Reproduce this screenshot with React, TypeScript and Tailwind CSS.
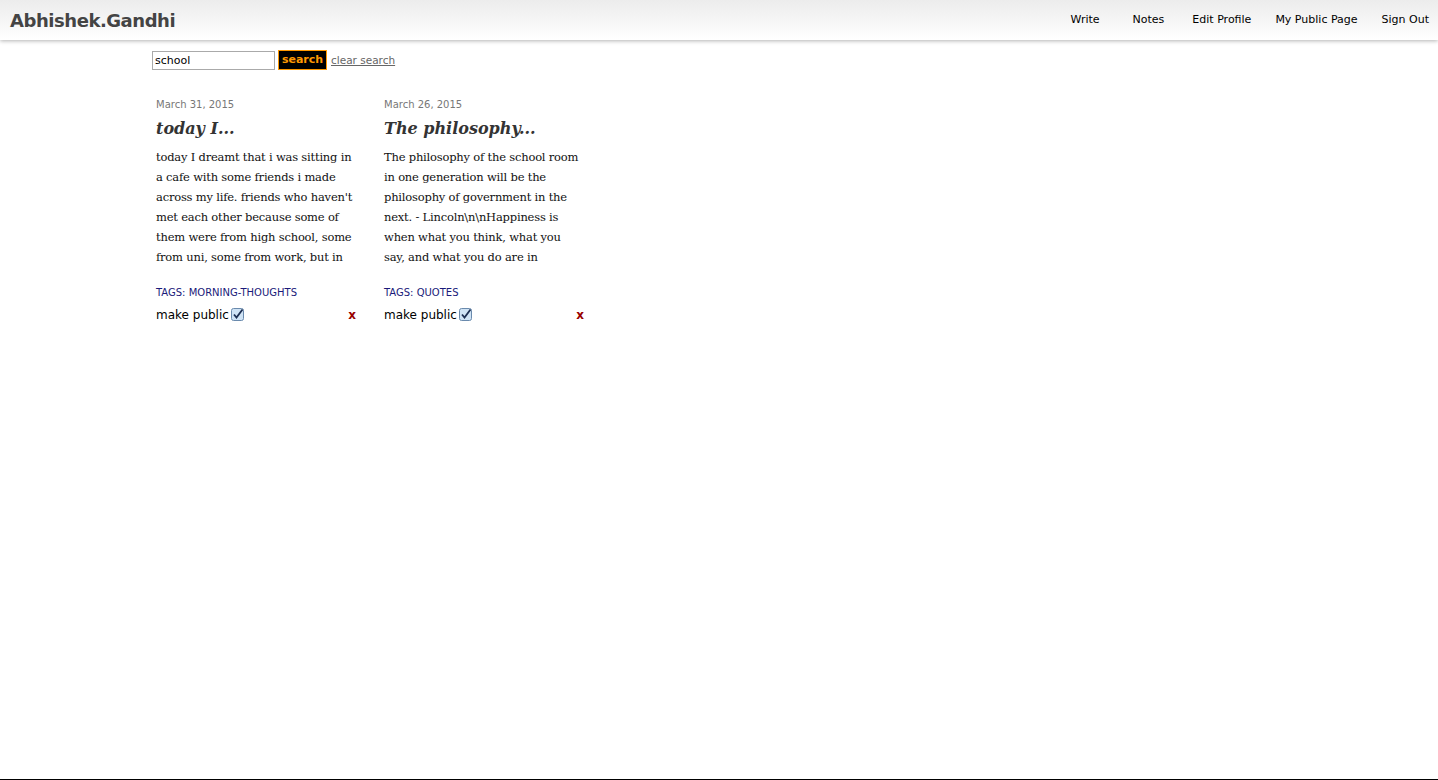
import { useState } from 'react';

// body lines are broken where the reference breaks them
const notes = [
  {
    date: 'March 31, 2015',
    title: 'today I...',
    lines: [
      'today I dreamt that i was sitting in',
      'a cafe with some friends i made',
      "across my life. friends who haven't",
      'met each other because some of',
      'them were from high school, some',
      'from uni, some from work, but in',
    ],
    tag: 'morning-thoughts',
  },
  {
    date: 'March 26, 2015',
    title: 'The philosophy...',
    lines: [
      'The philosophy of the school room',
      'in one generation will be the',
      'philosophy of government in the',
      'next. - Lincoln\\n\\nHappiness is',
      'when what you think, what you',
      'say, and what you do are in',
    ],
    tag: 'quotes',
  },
];

function CheckIcon() {
  return (
    <svg width="13" height="13" viewBox="0 0 13 13" className="ml-[2px] inline-block align-[-2px]">
      <rect x="0.5" y="0.5" width="12" height="12" rx="2" fill="#cfe3f5" stroke="#6a8aad" />
      <path d="M3 6.5 L5.5 9.5 L11.5 1.5" fill="none" stroke="#1d2f52" strokeWidth="1.8" />
    </svg>
  );
}

export default function App() {
  const [query, setQuery] = useState('school');

  return (
    <div className="relative h-[780px] bg-white border-b border-black font-['DejaVu_Sans',sans-serif]">
      {/* Top bar */}
      <header className="flex h-10 items-center justify-between bg-gradient-to-b from-[#ececec] to-white pl-[10px] pr-[9px] shadow-[0_1px_4px_rgba(0,0,0,0.3)]">
        <div className="text-[18px] font-bold tracking-[-0.45px] text-[#444]">Abhishek.Gandhi</div>
        <nav className="flex text-[11px] text-black">
          <span>Write</span>
          <span className="ml-[33px]">Notes</span>
          <span className="ml-[28px]">Edit Profile</span>
          <span className="ml-[24px]">My Public Page</span>
          <span className="ml-[24px]">Sign Out</span>
        </nav>
      </header>

      <main className="pl-[152px] pt-[10px]">
        {/* Search */}
        <div className="flex items-center">
          <input
            value={query}
            onChange={(e) => setQuery(e.target.value)}
            className="h-[19px] w-[123px] border border-[#aaa] px-[2px] text-[11px] text-black outline-none"
          />
          <button className="ml-[3px] h-[20px] w-[49px] border border-[#f90] bg-black text-[11px] font-bold text-[#f90]">
            search
          </button>
          <a className="ml-[4px] mt-[1px] text-[10.5px] text-[#666] underline">clear search</a>
        </div>

        {/* Notes */}
        <div className="mt-[27px] flex pl-[4px]">
          {notes.map((n) => (
            <div key={n.date} className="w-[228px]">
              <div className="text-[10px] text-[#777]">{n.date}</div>
              <h2 className="mt-[5px] font-['DejaVu_Serif',serif] text-[16px] font-bold italic text-[#333]">{n.title}</h2>
              <div className="mt-[6px] font-['DejaVu_Serif',serif] text-[11.5px] leading-[20px] tracking-[-0.2px] text-[#111]">
                {n.lines.map((l) => (
                  <div key={l} className="whitespace-nowrap">
                    {l}
                  </div>
                ))}
              </div>
              <div className="mt-[18px] text-[10px] uppercase text-[#1a1a7a]">Tags: {n.tag}</div>
              <div className="mt-[6px] flex w-[200px] items-center justify-between text-[12px] text-black">
                <span>
                  make public
                  <CheckIcon />
                </span>
                <span className="text-[12px] font-bold text-[#900]">x</span>
              </div>
            </div>
          ))}
        </div>
      </main>
    </div>
  );
}
